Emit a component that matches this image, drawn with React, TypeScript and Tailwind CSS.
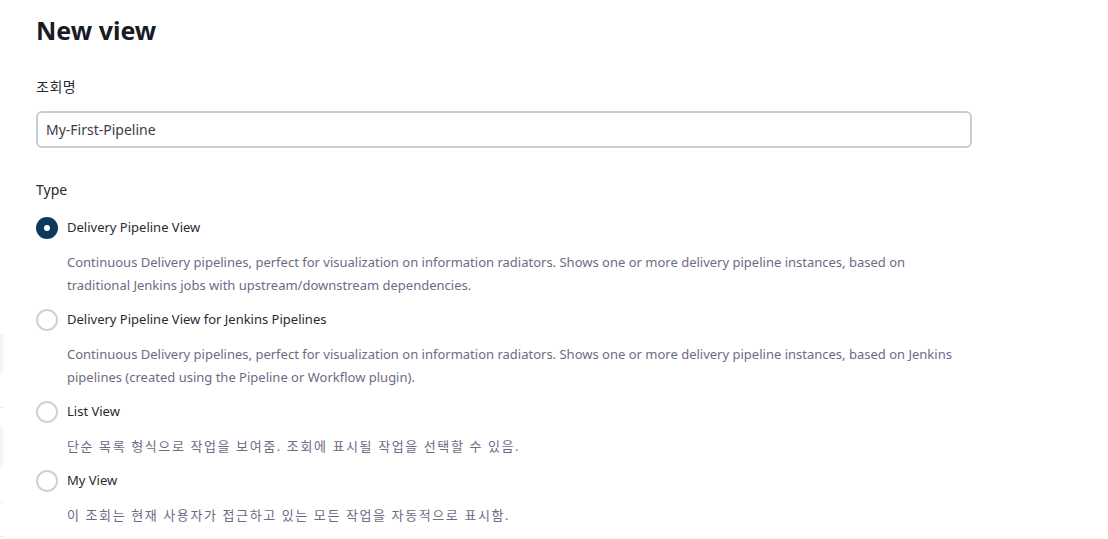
const font = {
  fontFamily: '"Noto Sans", "Noto Sans CJK KR", sans-serif',
};

type Option = {
  label: string;
  desc: string[];
  checked?: boolean;
  korean?: boolean;
};

const options: Option[] = [
  {
    label: "Delivery Pipeline View",
    checked: true,
    desc: [
      "Continuous Delivery pipelines, perfect for visualization on information radiators. Shows one or more delivery pipeline instances, based on",
      "traditional Jenkins jobs with upstream/downstream dependencies.",
    ],
  },
  {
    label: "Delivery Pipeline View for Jenkins Pipelines",
    desc: [
      "Continuous Delivery pipelines, perfect for visualization on information radiators. Shows one or more delivery pipeline instances, based on Jenkins",
      "pipelines (created using the Pipeline or Workflow plugin).",
    ],
  },
  {
    label: "List View",
    korean: true,
    desc: ["단순 목록 형식으로 작업을 보여줌. 조회에 표시될 작업을 선택할 수 있음."],
  },
  {
    label: "My View",
    korean: true,
    desc: ["이 조회는 현재 사용자가 접근하고 있는 모든 작업을 자동적으로 표시함."],
  },
];

function Radio({ checked }: { checked?: boolean }) {
  if (checked) {
    return (
      <span className="flex h-[22px] w-[22px] shrink-0 items-center justify-center rounded-full bg-[#0b3a5b]">
        <span className="h-[6px] w-[6px] rounded-full bg-white" />
      </span>
    );
  }
  return <span className="h-[22px] w-[22px] shrink-0 rounded-full border-2 border-[#c9d3d8] bg-white" />;
}

const App = () => {
  return (
    <div className="flex min-h-[539px] w-full bg-white" style={font}>
      {/* clipped sidebar edge */}
      <aside className="flex w-[3px] shrink-0 flex-col">
        <div className="h-[334px]" />
        <div className="h-[39px] bg-[#f3f3f8]" />
        <div className="h-[34px]" />
        <div className="h-px bg-[#ececf0]" />
        <div className="h-[20px]" />
        <div className="h-[39px] bg-[#f3f3f8]" />
        <div className="h-[35px]" />
        <div className="h-px bg-[#ececf0]" />
        <div className="h-[33px]" />
        <div className="h-px bg-[#ececf0]" />
      </aside>

      <main className="flex-1 pl-[33px] pt-[13px]">
        <h1 className="text-[25px] font-bold leading-[34px] text-[#1a1a24]">New view</h1>

        <div className="mt-[30px] text-[14px] leading-[20px] tracking-[0.5px] text-[#2a2a33]">조회명</div>
        <input
          readOnly
          value="My-First-Pipeline"
          className="mt-[14px] h-[37px] w-[936px] rounded-[6px] border-2 border-[#c8d0d5] bg-white px-[8px] text-[14px] text-[#3c3c44] outline-none"
          style={font}
        />

        <div className="mt-[32px] text-[14px] leading-[20px] text-[#2a2a33]">Type</div>

        <div className="mt-[17px] flex flex-col gap-[12px]">
          {options.map((o) => (
            <div key={o.label} className="flex flex-col gap-[12px]">
              <label className="flex h-[22px] items-center gap-[9px] text-[13px] text-[#2a2a33]">
                <Radio checked={o.checked} />
                {o.label}
              </label>
              <div
                className={
                  o.korean
                    ? "pl-[31px] text-[13px] leading-[23px] tracking-[1.6px] text-[#6d6b84]"
                    : "pl-[31px] text-[13px] leading-[23px] text-[#6d6b84]"
                }
              >
                {o.desc.map((d) => (
                  <div key={d}>{d}</div>
                ))}
              </div>
            </div>
          ))}
        </div>
      </main>
    </div>
  );
};

export default App;
